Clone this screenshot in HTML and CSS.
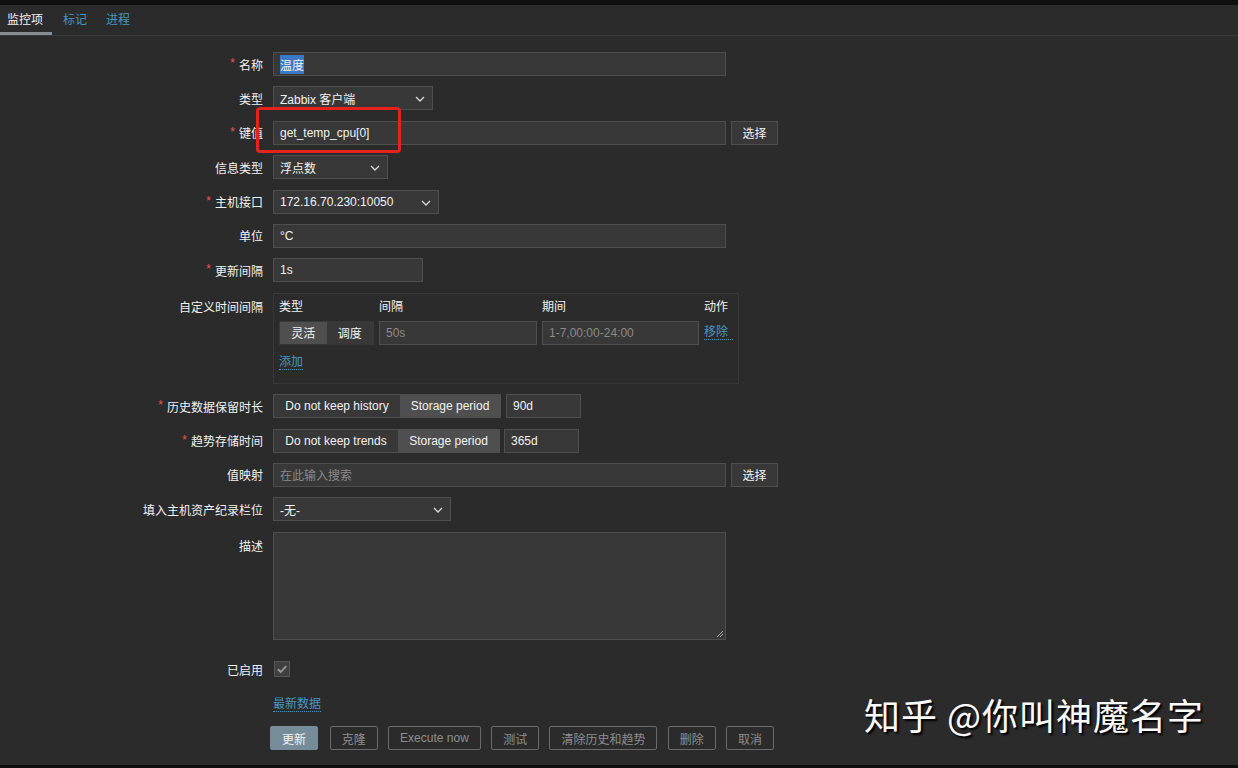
FILE: index.html
```html
<!DOCTYPE html>
<html lang="zh">
<head>
<meta charset="utf-8">
<link rel="stylesheet" href="styles.css">
</head>
<body>
<div class="topbar"></div>
<nav class="tabs">
  <span class="tab active">监控项</span>
  <span class="tab">标记</span>
  <span class="tab">进程</span>
</nav>
<div class="form">
  <div class="label"><span class="req">*</span>名称</div>
  <div class="field"><div class="input w-full"><span class="sel">温度</span></div></div>

  <div class="label">类型</div>
  <div class="field"><div class="select w160">Zabbix 客户端<svg class="chev" viewBox="0 0 10 6"><path d="M1 1l4 4 4-4"/></svg></div></div>

  <div class="label"><span class="req">*</span>键值</div>
  <div class="field keyfield"><div class="input w-full">get_temp_cpu[0]</div><div class="btn-sm">选择</div><div class="redbox"></div></div>

  <div class="label">信息类型</div>
  <div class="field"><div class="select w115">浮点数<svg class="chev" viewBox="0 0 10 6"><path d="M1 1l4 4 4-4"/></svg></div></div>

  <div class="label"><span class="req">*</span>主机接口</div>
  <div class="field"><div class="select w166">172.16.70.230:10050<svg class="chev" viewBox="0 0 10 6"><path d="M1 1l4 4 4-4"/></svg></div></div>

  <div class="label">单位</div>
  <div class="field"><div class="input w-full">°C</div></div>

  <div class="label"><span class="req">*</span>更新间隔</div>
  <div class="field"><div class="input w150">1s</div></div>

  <div class="label top">自定义时间间隔</div>
  <div class="field">
    <div class="intervals">
      <div class="ihead"><span class="c1">类型</span><span class="c2">间隔</span><span class="c3">期间</span><span class="c4">动作</span></div>
      <div class="irow">
        <div class="seg c1"><span class="on">灵活</span><span>调度</span></div>
        <div class="input dim c2">50s</div>
        <div class="input dim c3">1-7,00:00-24:00</div>
        <span class="link c4">移除</span>
      </div>
      <div class="iadd"><span class="link">添加</span></div>
    </div>
  </div>

  <div class="label"><span class="req">*</span>历史数据保留时长</div>
  <div class="field"><div class="seg2"><span class="off h1">Do not keep history</span><span class="on h2">Storage period</span></div><div class="input w75">90d</div></div>

  <div class="label"><span class="req">*</span>趋势存储时间</div>
  <div class="field"><div class="seg2"><span class="off t1">Do not keep trends</span><span class="on t2">Storage period</span></div><div class="input w75 tr">365d</div></div>

  <div class="label">值映射</div>
  <div class="field"><div class="input w-full ph">在此输入搜索</div><div class="btn-sm">选择</div></div>

  <div class="label">填入主机资产纪录栏位</div>
  <div class="field"><div class="select w178">-无-<svg class="chev" viewBox="0 0 10 6"><path d="M1 1l4 4 4-4"/></svg></div></div>

  <div class="label top">描述</div>
  <div class="field"><div class="textarea"><svg class="grip" viewBox="0 0 8 8"><path d="M7 1L1 7M7 4L4 7"/></svg></div></div>

  <div class="label en">已启用</div>
  <div class="field en"><div class="check"><svg viewBox="0 0 12 12"><path d="M2.5 6.2l2.4 2.4 4.8-5"/></svg></div></div>

  <div class="label"></div>
  <div class="field latest"><span class="link">最新数据</span></div>

  <div class="label"></div>
  <div class="field buttons">
    <span class="btn primary">更新</span>
    <span class="btn">克隆</span>
    <span class="btn">Execute now</span>
    <span class="btn">测试</span>
    <span class="btn">清除历史和趋势</span>
    <span class="btn">删除</span>
    <span class="btn">取消</span>
  </div>
</div>
<div class="watermark">知乎 @你叫神魔名字</div>
<div class="bottombar"></div>
</body>
</html>
```
FILE: styles.css
```css
html, body {
  margin: 0;
  padding: 0;
  background: #2b2b2b;
  height: 768px;
  overflow: hidden;
}
body {
  font-family: "Liberation Sans", "Noto Sans CJK SC", sans-serif;
  font-size: 12px;
  color: #f2f2f2;
  position: relative;
}
.topbar {
  height: 5px;
  background: #0f0f0f;
}
.tabs {
  display: flex;
  height: 30px;
  border-bottom: 1px solid #3a3a3a;
  padding-left: 0;
}
.tab {
  display: flex;
  align-items: center;
  padding: 0 9px 0 7px;
  margin-right: 2px;
  color: #4796c4;
  font-size: 12px;
  height: 27px;
  border-bottom: 3px solid transparent;
}
.tab:nth-child(2) { padding-left: 9px; padding-right: 9px; }
.tab:nth-child(3) { padding-left: 8px; }
.tab.active {
  color: #f2f2f2;
  border-bottom-color: #878d90;
}
.form {
  display: grid;
  grid-template-columns: 263px 1fr;
  column-gap: 10px;
  row-gap: 10.4px;
  padding-top: 16px;
  grid-auto-rows: minmax(24px, auto);
}
.label {
  display: flex;
  align-items: center;
  justify-content: flex-end;
  height: 24px;
  color: #f2f2f2;
  white-space: nowrap;
}
.label.top { align-items: flex-start; padding-top: 5px; height: auto; }
.req {
  color: #e45959;
  margin-right: 4px;
  font-size: 12px;
  position: relative;
  top: -1px;
}
.field {
  display: flex;
  align-items: center;
  gap: 5px;
  position: relative;
}
.input, .select {
  box-sizing: border-box;
  height: 24px;
  background: #383838;
  border: 1px solid #4f4f4f;
  padding: 0 6px;
  display: flex;
  align-items: center;
  color: #f2f2f2;
  white-space: nowrap;
}
.select { position: relative; padding-right: 24px; }
.chev {
  position: absolute;
  right: 7px;
  top: 9px;
  width: 10px;
  height: 6px;
  fill: none;
  stroke: #d8d8d8;
  stroke-width: 1.3;
}
.w-full { width: 453px; }
.w160 { width: 160px; }
.w115 { width: 115px; }
.w166 { width: 166px; }
.w150 { width: 150px; }
.w178 { width: 178px; }
.w75 { width: 75px; }
.tr { width: 75px; margin-left: -1px; }
.sel {
  background: #3d78c5;
  color: #f2f2f2;
  padding: 1px 0;
}
.ph { color: #8a8a8a; }
.btn-sm {
  box-sizing: border-box;
  height: 24px;
  width: 47px;
  display: flex;
  align-items: center;
  justify-content: center;
  background: #383838;
  border: 1px solid #4f4f4f;
  color: #f2f2f2;
}
.redbox {
  position: absolute;
  left: -17px;
  top: -14px;
  width: 145px;
  height: 46px;
  box-sizing: border-box;
  border: 3px solid #e3231c;
  border-radius: 4px;
}
.intervals {
  box-sizing: border-box;
  width: 466px;
  height: 91px;
  border: 1px solid #383838;
  padding: 3px 5px 5px;
}
.ihead, .irow {
  display: grid;
  grid-template-columns: 95px 158px 157px 1fr;
  column-gap: 5px;
  align-items: center;
}
.ihead { height: 17px; }
.irow { height: 24px; margin-top: 7px; }
.seg {
  display: flex;
  height: 24px;
  box-sizing: border-box;
  border: 1px solid #383838;
}
.seg span {
  flex: 1;
  display: flex;
  align-items: center;
  justify-content: center;
  background: #383838;
}
.seg span.on { background: #4f4f4f; }
.input.dim { color: #8a8a8a; width: 100%; }
.link {
  color: #4796c4;
  border-bottom: 1px dotted #4796c4;
  line-height: 14px;
}
.iadd { margin-top: 10px; }
.seg2 {
  display: flex;
  height: 24px;
  box-sizing: border-box;
  border: 1px solid #4f4f4f;
}
.seg2 span {
  display: flex;
  align-items: center;
  justify-content: center;
  white-space: nowrap;
  box-sizing: border-box;
}
.seg2 .off { background: #383838; }
.seg2 .on { background: #4f4f4f; }
.h1 { width: 126px; }
.h2 { width: 100px; }
.t1 { width: 124px; }
.t2 { width: 101px; }
.textarea {
  box-sizing: border-box;
  width: 453px;
  height: 108px;
  background: #383838;
  border: 1px solid #4f4f4f;
  position: relative;
}
.grip {
  position: absolute;
  right: 1px;
  bottom: 1px;
  width: 8px;
  height: 8px;
  fill: none;
  stroke: #aaa;
  stroke-width: 1;
}
.en { margin-top: 7px; }
.check {
  width: 16px;
  height: 16px;
  box-sizing: border-box;
  background: #404040;
  border: 1px solid #555;
  margin-left: 1px;
}
.check svg {
  width: 14px;
  height: 14px;
  fill: none;
  stroke: #9a9a9a;
  stroke-width: 1.6;
}
.latest { margin-top: 1px; height: 24px; }
.buttons { gap: 10.3px; margin-left: -3px; margin-top: -1px; }
.btn {
  box-sizing: border-box;
  height: 24px;
  padding: 0 11px;
  display: flex;
  align-items: center;
  border: 1px solid #6a6a6a;
  border-radius: 2px;
  color: #8e8e8e;
  white-space: nowrap;
}
.btn.primary {
  background: #768d99;
  border-color: #768d99;
  color: #f2f2f2;
  width: 48px;
  justify-content: center;
  margin-right: 1.5px;
}
.watermark {
  position: absolute;
  left: 864px;
  top: 688px;
  font-family: "Noto Sans CJK SC", sans-serif;
  font-size: 36px;
  color: #fbfbfb;
  text-shadow: 2px 2px 2px #000;
  letter-spacing: 1px;
  white-space: pre;
}
.bottombar {
  position: absolute;
  left: 0;
  right: 0;
  bottom: 0;
  height: 3px;
  background: #0f0f0f;
}
```
